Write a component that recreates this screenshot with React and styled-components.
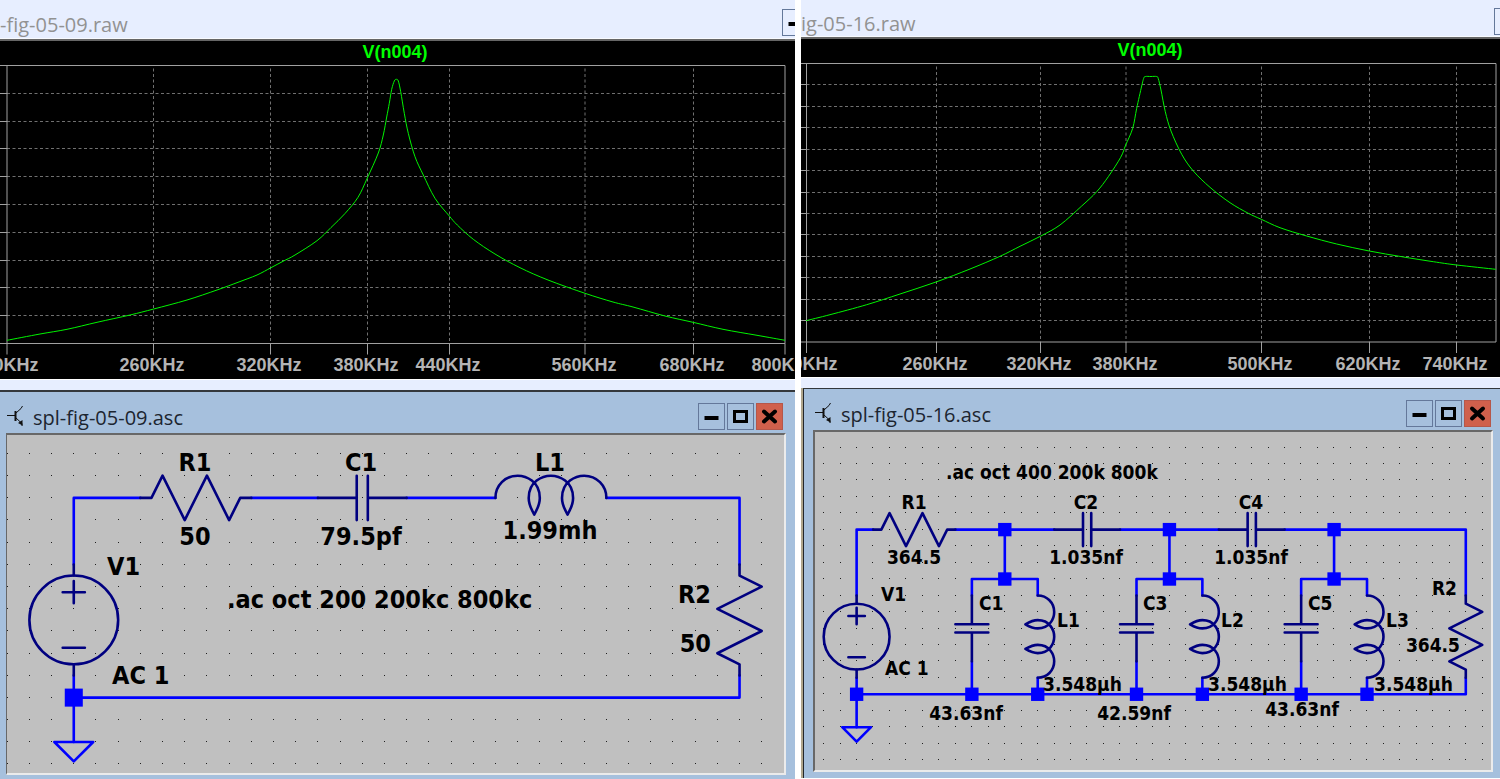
import React from 'react';
import styled, { createGlobalStyle } from 'styled-components';

const GlobalStyle = createGlobalStyle`
  * {
    box-sizing: border-box;
  }
  body {
    margin: 0;
    background: #ffffff;
    font-family: "Open Sans", "Noto Sans", sans-serif;
  }
`;

const Page = styled.main`
  display: grid;
  grid-template-columns: 795fr 699fr;
  gap: 6px;
  min-height: 100vh;
`;

const Pane = styled.section`
  display: flex;
  flex-direction: column;
  min-width: 0;
  background: #e7eeff;
`;

const PlotBar = styled.header`
  display: flex;
  align-items: center;
  justify-content: space-between;
  height: ${(p) => p.$height}px;
  padding-top: 6px;
  overflow: hidden;
  border-bottom: 1px solid #f8faff;
`;

const PlotTitle = styled.h2`
  margin: 0;
  padding-top: 5px;
  font-size: 20px;
  line-height: 28px;
  font-weight: 400;
  color: #929292;
  white-space: nowrap;
`;

const CutControls = styled.div`
  width: ${(p) => p.$width}px;
  overflow: hidden;
`;

const PlotFrame = styled.div`
  background: #000000;
  border-top: 2px solid #666666;
  border-bottom: 1px solid #ffffff;
  margin-bottom: ${(p) => p.$space}px;
`;

const Drawing = styled.svg`
  display: block;
  width: 100%;
  height: auto;
  text {
    font-weight: 700;
  }
`;

const PlotText = styled.text`
  font-family: "Liberation Sans", Arial, sans-serif;
  font-size: 18px;
  text-anchor: middle;
  fill: ${(p) => (p.$trace ? '#00ff00' : '#b4b4b4')};
`;

const WindowRow = styled.div`
  display: flex;
  flex: 1;
  background: #b0a68c;
  padding-left: ${(p) => (p.$framed ? 2 : 0)}px;
  border-bottom: ${(p) => (p.$framed ? 1 : 0)}px solid #ffffff;
`;

const Window = styled.div`
  flex: 1;
  min-width: 0;
  background: #a6c0dd;
  border-top: ${(p) => (p.$framed ? 1 : 2)}px solid #34383c;
  border-left: ${(p) => (p.$framed ? 1 : 0)}px solid #22262a;
  padding: ${(p) => (p.$framed ? '0 7px 4px 9px' : '0 9px 4px 6px')};
`;

const TitleBar = styled.header`
  display: flex;
  align-items: center;
  gap: 9px;
  height: 41px;
  padding: ${(p) => (p.$framed ? '8px 2px 0 2px' : '8px 3px 0 1px')};
`;

const Title = styled.h2`
  flex: 1;
  margin: 0;
  padding-top: 3px;
  font-size: 20px;
  line-height: 28px;
  font-weight: 400;
  color: #1c2530;
  white-space: nowrap;
`;

const Controls = styled.div`
  display: flex;
  gap: 2px;
`;

const ControlButton = styled.button`
  flex: none;
  display: block;
  width: 27px;
  height: 27px;
  padding: 0;
  border: 1px solid ${(p) => (p.$close ? '#b5574a' : '#64789a')};
  background: ${(p) => (p.$close ? '#d0604c' : 'transparent')};
  svg {
    display: block;
  }
`;

const Client = styled.div`
  background: #c0c0c0;
  border-top: 2px solid #686868;
  border-left: ${(p) => (p.$framed ? 2 : 1)}px solid #686868;
  border-right: 2px solid #ebebeb;
  border-bottom: 2px solid #ebebeb;
`;

const Wiring = styled.g`
  fill: none;
  stroke: #000080;
  stroke-width: 2.6px;
  stroke-linecap: round;
  stroke-linejoin: round;
  path,
  circle {
    vector-effect: non-scaling-stroke;
  }
`;

const Wire = styled.path`
  stroke: #0000ff;
`;

const Label = styled.text`
  font-family: "DejaVu Sans Condensed", "DejaVu Sans", sans-serif;
  font-size: ${(p) => p.$size}px;
  fill: #000000;
`;

function MinimizeButton() {
  return (
    <ControlButton type="button" aria-label="Minimize">
      <svg width="25" height="25" viewBox="0 0 25 25">
        <path d="M5.5 14H19.5" stroke="#000" strokeWidth="4" />
      </svg>
    </ControlButton>
  );
}

function WindowControls() {
  return (
    <Controls>
      <MinimizeButton />
      <ControlButton type="button" aria-label="Maximize">
        <svg width="25" height="25" viewBox="0 0 25 25">
          <rect x="6.5" y="7.5" width="12" height="10" fill="none" stroke="#000" strokeWidth="3" />
        </svg>
      </ControlButton>
      <ControlButton type="button" aria-label="Close" $close>
        <svg width="25" height="25" viewBox="0 0 25 25">
          <path d="M7 7.5L18 17.5M18 7.5L7 17.5" stroke="#000" strokeWidth="4" strokeLinecap="round" />
        </svg>
      </ControlButton>
    </Controls>
  );
}

function TransistorIcon() {
  return (
    <svg width="17" height="22" viewBox="0 0 17 22" fill="none" stroke="#111">
      <path d="M0 9.5H8" />
      <path d="M8.5 5V15" strokeWidth="2" />
      <path d="M9 7L14 2.500L15.500 0" />
      <path d="M9 12L15 17.500V20" />
      <path d="M11 17L15.500 14V19.500Z" fill="#111" stroke="none" />
    </svg>
  );
}

// ---- plots ----

const plots = {
  series: {
    viewBox: '0 41 795 338',
    left: 7, right: 785, top: 65.5, bottom: 343.5,
    rows: 10,
    trace: [395, 58],
    labelY: 371,
    ticks: [
      [7, '200KHz'], [153.5, '260KHz'], [270.5, '320KHz'], [367.5, '380KHz'],
      [449.5, '440KHz'], [585, '560KHz'], [693.5, '680KHz'], [785, '800KHz'],
    ],
    curve: [
      [7, 340.3], [40, 334], [67, 329.3], [97, 322.3], [130, 315], [153.7, 309], [187, 300],
      [217, 290], [238, 282.3], [257, 275], [271, 267.7], [283, 261.3], [295, 255], [317, 240.7],
      [331, 227.5], [345, 213.5], [358, 197.3], [367.3, 178], [378.3, 153], [383.3, 135],
      [386.7, 117], [389.3, 103.3], [391.7, 89.3], [394.3, 81], [396.3, 79.3], [398.3, 81],
      [400.7, 91.7], [404.3, 113.3], [408.3, 133.3], [415, 156.7], [423.3, 175], [435, 198.3],
      [449.3, 216], [457.3, 225], [473.3, 239.3], [495, 254], [520, 267.7], [548, 280],
      [585, 293.3], [613, 302], [633, 307], [665, 316], [693, 322.3], [723, 329.3],
      [757, 335.3], [785, 340.3],
    ],
  },
  ladder: {
    viewBox: '801 39 699 338',
    left: 806.5, right: 1496, top: 63.5, bottom: 342,
    rows: 13,
    trace: [1150, 56],
    labelY: 370,
    ticks: [
      [806.5, '200KHz'], [936.5, '260KHz'], [1040.5, '320KHz'], [1126, '380KHz'],
      [1261.5, '500KHz'], [1369.5, '620KHz'], [1456.5, '740KHz'],
    ],
    curve: [
      [806, 320.7], [830, 314.7], [866.7, 304.7], [900, 294], [936, 282], [970, 269], [1000, 256.3],
      [1020, 246.3], [1040.3, 236.3], [1060, 225], [1081.7, 206], [1096.7, 191.7], [1108.3, 176.7],
      [1120.7, 157.3], [1125.7, 145], [1132.7, 128.3], [1136.7, 108.3], [1141.7, 86],
      [1143.7, 78.3], [1145.3, 76.5], [1151, 76.5], [1156.7, 76.5], [1158.3, 78.7], [1161, 90],
      [1165.3, 111.7], [1171, 131], [1181.7, 154.3], [1193.3, 171], [1210, 187.3], [1230, 202.7],
      [1248.3, 213.3], [1261.3, 219.3], [1280, 227.7], [1306.7, 236], [1336.7, 244],
      [1369.3, 251], [1401.7, 256.7], [1433.3, 261.7], [1456.7, 265], [1495.7, 269.3],
    ],
  },
};

// Catmull-Rom through the sampled points
function smooth(points) {
  let d = `M${points[0]}`;
  for (let i = 0; i < points.length - 1; i++) {
    const [x0, y0] = points[i - 1] || points[i];
    const [x1, y1] = points[i];
    const [x2, y2] = points[i + 1];
    const [x3, y3] = points[i + 2] || points[i + 1];
    d += `C${x1 + (x2 - x0) / 6} ${y1 + (y2 - y0) / 6} ${x2 - (x3 - x1) / 6} ${y2 - (y3 - y1) / 6} ${x2} ${y2}`;
  }
  return d;
}

function Plot({ viewBox, left, right, top, bottom, rows, trace, labelY, ticks, curve }) {
  const step = (bottom - top) / rows;
  const gridRows = Array.from({ length: rows - 1 }, (_, i) => Math.floor(top + step * (i + 1)) + 0.5);
  return (
    <Drawing viewBox={viewBox} role="img" aria-label="Frequency response of V(n004)">
      <g stroke="#707070" strokeDasharray="3 2.5">
        {gridRows.map((y) => <path key={y} d={`M${left} ${y}H${right}`} />)}
        {ticks.slice(1).map(([x]) => x < right && <path key={x} d={`M${x} ${top + 3}V${bottom}`} />)}
      </g>
      <g stroke="#a0a0a0">
        {gridRows.map((y) => <path key={y} d={`M${left - 8} ${y}H${left}`} />)}
        {ticks.map(([x]) => <path key={x} d={`M${x} ${bottom}V${bottom + 11}`} />)}
        <path d={`M${left - 8} ${top}H${right}V${bottom}H${left - 8}M${left} ${top}V${bottom}`} fill="none" />
      </g>
      <path d={smooth(curve)} fill="none" stroke="#00f400" strokeWidth="1" />
      <PlotText x={trace[0]} y={trace[1]} $trace>V(n004)</PlotText>
      {ticks.map(([x, label]) => (
        <PlotText key={label} x={Math.floor(x) - 1} y={labelY}>{label}</PlotText>
      ))}
    </Drawing>
  );
}

// ---- schematic symbols, drawn along +x from their first pin ----

const at = (x, y, turn) => `translate(${x} ${y})${turn ? ' rotate(90)' : ''}`;

const Resistor = ({ x, y, turn }) => (
  <path transform={at(x, y, turn)} d="M0 0H8L16 -16L32 16L48 -16L64 16L72 0H80" />
);

const Capacitor = ({ x, y, turn }) => (
  <path transform={at(x, y, turn)} d="M0 0H28M28 -16V16M36 -16V16M36 0H64" />
);

const Inductor = ({ x, y, turn }) => (
  <path
    transform={at(x, y, turn)}
    d="M0 0C0 -9 7 -16 16 -16C22 -16 32 -12 32 0Q32 5 28 12Q24 5 24 0C24 -12 34 -16 40 -16
      C46 -16 56 -12 56 0Q56 5 52 12Q48 5 48 0C48 -12 58 -16 64 -16C73 -16 80 -9 80 0"
  />
);

const Source = ({ x, y }) => (
  <g transform={at(x, y)}>
    <circle cx="0" cy="40" r="32" />
    <path d="M0 0V8M0 72V80M-8 20H8M0 12V28M-8 60H8" />
  </g>
);

const Ground = ({ x, y }) => <Wire d={`M${x - 14} ${y}H${x + 14}L${x} ${y + 14}Z`} />;

const Node = ({ x, y }) => (
  <rect x={x - 6.5} y={y - 6.5} width="13" height="13" fill="#0000ff" stroke="none" />
);

function Dots({ x, y, step, cols, rows }) {
  const d = [];
  for (let r = 0; r < rows; r++) {
    for (let c = 0; c < cols; c++) {
      d.push(`M${Math.floor(x + c * step)} ${Math.floor(y + r * step)}h1v1h-1z`);
    }
  }
  return <path d={d.join('')} fill="#202020" />;
}

function Labels({ size, items }) {
  return items.map(([x, y, text, anchor]) => (
    <Label key={`${x}-${y}`} x={x} y={y} $size={size} textAnchor={anchor || 'start'}>{text}</Label>
  ));
}

const seriesLabels = [
  [195, 471, 'R1', 'middle'],
  [195, 545, '50', 'middle'],
  [361, 471, 'C1', 'middle'],
  [361, 545, '79.5pf', 'middle'],
  [550, 471, 'L1', 'middle'],
  [550, 539, '1.99mh', 'middle'],
  [107, 575, 'V1'],
  [112, 684, 'AC 1'],
  [227, 608, '.ac oct 200 200kc 800kc'],
  [711, 603, 'R2', 'end'],
  [711, 652, '50', 'end'],
];

function SeriesCircuit() {
  return (
    <Drawing viewBox="7 435 777 338" role="img" aria-label="Series resonant circuit">
      <Dots x={7.2} y={453.3} step={22.19} cols={35} rows={15} />
      <Wiring transform="translate(7.2 453.5) scale(1.387)">
        <Wire d="M48 80V32H96M176 32H224M288 32H352M432 32H528V80M528 160V176H48M48 160V208" />
        <Resistor x={96} y={32} />
        <Capacitor x={224} y={32} />
        <Inductor x={352} y={32} />
        <Resistor x={528} y={80} turn />
        <Source x={48} y={80} />
        <Node x={48} y={176} />
        <Ground x={48} y={208} />
      </Wiring>
      <Labels size={25} items={seriesLabels} />
    </Drawing>
  );
}

const ladderLabels = [
  [946, 479, '.ac oct 400 200k 800k'],
  [914, 509, 'R1', 'middle'],
  [914, 564, '364.5', 'middle'],
  [1086, 509, 'C2', 'middle'],
  [1086, 564, '1.035nf', 'middle'],
  [1251, 509, 'C4', 'middle'],
  [1251, 564, '1.035nf', 'middle'],
  [881, 601, 'V1'],
  [885, 675, 'AC 1'],
  [979, 610, 'C1'],
  [1143, 610, 'C3'],
  [1308, 610, 'C5'],
  [1057, 627, 'L1'],
  [1221, 627, 'L2'],
  [1386, 627, 'L3'],
  [1043, 691, '3.548µh'],
  [1208, 691, '3.548µh'],
  [1374, 691, '3.548µh'],
  [966, 720, '43.63nf', 'middle'],
  [1134, 720, '42.59nf', 'middle'],
  [1302, 716, '43.63nf', 'middle'],
  [1457, 595, 'R2', 'end'],
  [1460, 652, '364.5', 'end'],
];

function LadderCircuit() {
  return (
    <Drawing viewBox="815 432 676 338" role="img" aria-label="Three section band pass filter">
      <Dots x={823.6} y={447} step={16.46} cols={41} rows={20} />
      <Wiring transform="translate(823.7 447.3) scale(1.029)">
        <Wire d="M32 144V80H48M128 80H224M288 80H384M448 80H624V144M624 224V240H32M32 224V272" />
        <Resistor x={48} y={80} />
        <Capacitor x={224} y={80} />
        <Capacitor x={384} y={80} />
        {[176, 336, 496].map((x) => (
          <g key={x}>
            <Wire d={`M${x} 80V128M${x - 32} 144V128H${x + 32}V144M${x - 32} 208V240M${x + 32} 224V240`} />
            <Capacitor x={x - 32} y={144} turn />
            <Inductor x={x + 32} y={144} turn />
            <Node x={x} y={80} />
            <Node x={x} y={128} />
            <Node x={x - 32} y={240} />
            <Node x={x + 32} y={240} />
          </g>
        ))}
        <Resistor x={624} y={144} turn />
        <Source x={32} y={144} />
        <Node x={32} y={240} />
        <Ground x={32} y={272} />
      </Wiring>
      <Labels size={19} items={ladderLabels} />
    </Drawing>
  );
}

function SchematicWindow({ title, framed, children }) {
  return (
    <WindowRow $framed={framed}>
      <Window $framed={framed}>
        <TitleBar $framed={framed}>
          <TransistorIcon />
          <Title>{title}</Title>
          <WindowControls />
        </TitleBar>
        <Client $framed={framed}>{children}</Client>
      </Window>
    </WindowRow>
  );
}

export default function App() {
  return (
    <>
      <GlobalStyle />
      <Page>
        <Pane>
          <PlotBar $height={39}>
            <PlotTitle>-fig-05-09.raw</PlotTitle>
            <CutControls $width={13}><MinimizeButton /></CutControls>
          </PlotBar>
          <PlotFrame $space={10}><Plot {...plots.series} /></PlotFrame>
          <SchematicWindow title="spl-fig-05-09.asc">
            <SeriesCircuit />
          </SchematicWindow>
        </Pane>
        <Pane>
          <PlotBar $height={37}>
            <PlotTitle>ig-05-16.raw</PlotTitle>
            <CutControls $width={6}><MinimizeButton /></CutControls>
          </PlotBar>
          <PlotFrame $space={10}><Plot {...plots.ladder} /></PlotFrame>
          <SchematicWindow title="spl-fig-05-16.asc" framed>
            <LadderCircuit />
          </SchematicWindow>
        </Pane>
      </Page>
    </>
  );
}
